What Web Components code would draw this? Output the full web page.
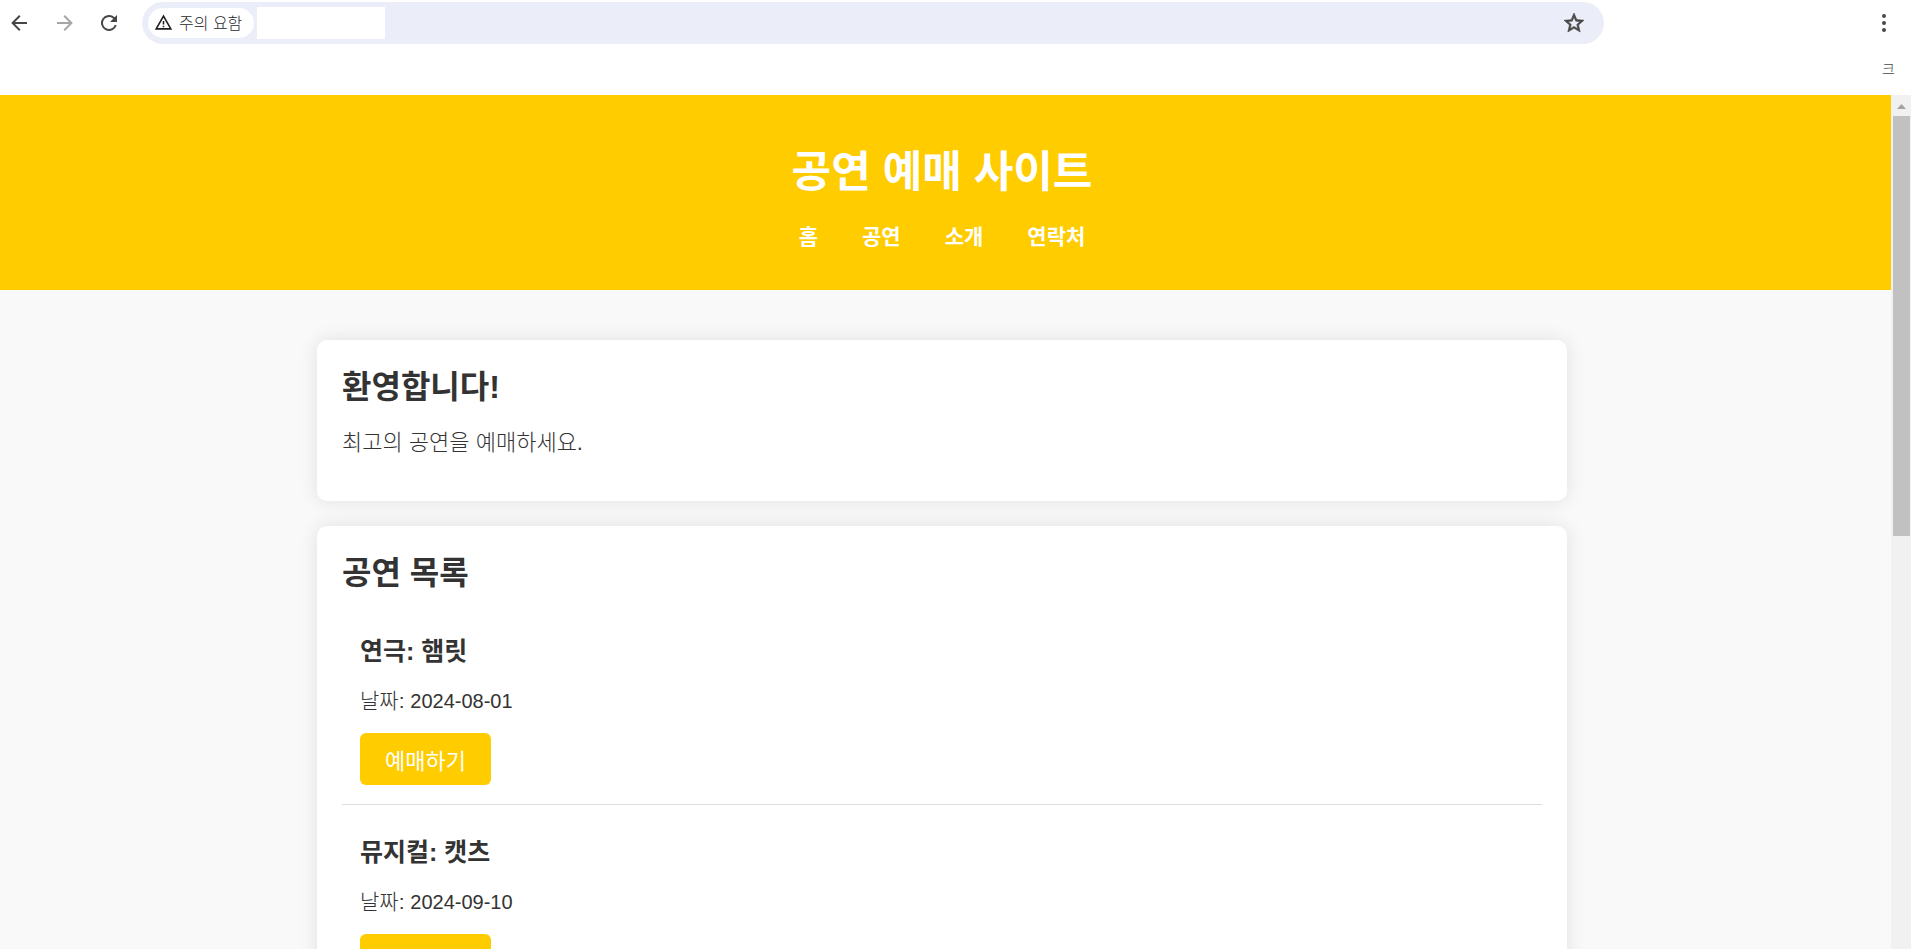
<!DOCTYPE html>
<html lang="ko">
<head>
<meta charset="UTF-8">
<meta name="viewport" content="width=device-width, initial-scale=1.0">
<title>공연 예매 사이트</title>
<style>
  html, body {
    height: 100%;
    margin: 0;
  }

  body {
    font-family: "Liberation Sans", "Noto Sans CJK KR", sans-serif;
    color: #333;
    overflow: hidden;
  }
</style>
</head>
<body>
<browser-window>
  <browser-toolbar slot="toolbar"></browser-toolbar>
  <site-header heading="공연 예매 사이트">
    <a href="#home">홈</a>
    <a href="#shows">공연</a>
    <a href="#about">소개</a>
    <a href="#contact">연락처</a>
  </site-header>
  <site-main>
    <content-card heading="환영합니다!">
      <welcome-text>최고의 공연을 예매하세요.</welcome-text>
    </content-card>
    <content-card heading="공연 목록">
      <show-item heading="연극: 햄릿" date="2024-08-01"></show-item>
      <show-item heading="뮤지컬: 캣츠" date="2024-09-10"></show-item>
    </content-card>
  </site-main>
</browser-window>

<script>
class BrowserWindow extends HTMLElement {
  constructor() {
    super();
    this.attachShadow({ mode: 'open' });
    this.shadowRoot.innerHTML = `
      <style>
        :host {
          display: flex;
          flex-direction: column;
          height: 100vh;
          background: white;
        }

        .view {
          display: flex;
          flex: 1;
          min-height: 0;
        }

        .page {
          flex: 1;
          min-width: 0;
          overflow: hidden;
          background: #f9f9f9;
        }
      </style>
      <slot name="toolbar"></slot>
      <div class="view">
        <div class="page"><slot></slot></div>
        <scroll-bar></scroll-bar>
      </div>
    `;
  }
}

class ScrollBar extends HTMLElement {
  constructor() {
    super();
    this.attachShadow({ mode: 'open' });
    this.shadowRoot.innerHTML = `
      <style>
        :host {
          display: flex;
          flex-direction: column;
          box-sizing: border-box;
          width: 20px;
          padding: 0 1px 0 2px;
          background: #f1f1f1;
        }

        svg {
          display: block;
          flex: none;
        }

        .thumb {
          flex: 420;
          background: #c1c1c1;
        }

        .rest {
          flex: 413;
        }
      </style>
      <svg width="17" height="21" viewBox="0 0 17 21"><path d="M4 14L8.500 9L13 14Z" fill="#a3a3a3"/></svg>
      <div class="thumb"></div>
      <div class="rest"></div>
    `;
  }
}

class BrowserToolbar extends HTMLElement {
  constructor() {
    super();
    this.attachShadow({ mode: 'open' });
    this.shadowRoot.innerHTML = `
      <style>
        :host {
          display: block;
          height: 95px;
          flex: none;
          color: #474747;
        }

        button {
          display: flex;
          align-items: center;
          justify-content: center;
          width: 45px;
          height: 42px;
          padding: 0;
          border: 0;
          background: none;
          color: inherit;
          font: inherit;
        }

        button:disabled {
          color: #a6a6a6;
        }

        svg {
          flex: none;
          fill: currentColor;
        }

        .bar {
          display: flex;
          align-items: center;
          padding: 2px 5px 0 0;
        }

        .nav {
          display: flex;
          width: 142px;
        }

        .nav button {
          justify-content: flex-start;
          padding-left: 7px;
        }

        .address {
          display: flex;
          align-items: center;
          flex: 1;
          height: 42px;
          padding-left: 6px;
          box-sizing: border-box;
          border-radius: 21px;
          background: #ebeef8;
        }

        .address .chip {
          justify-content: flex-start;
          width: 106px;
          height: 30px;
          padding: 0 0 2px 6px;
          gap: 6px;
          border-radius: 15px;
          background: white;
          color: #1f1f1f;
          font-size: 16px;
          font-weight: 300;
        }

        input {
          width: 128px;
          height: 32px;
          margin: 0 auto 0 3px;
          padding: 0 4px;
          box-sizing: border-box;
          border: 0;
          background: white;
          font: inherit;
        }

        .address .star {
          width: 60px;
        }

        .star path {
          stroke: currentColor;
          stroke-width: 0.6;
        }

        .extensions {
          width: 257px;
        }

        .bookmarks {
          display: flex;
          justify-content: flex-end;
          align-items: center;
          height: 48px;
          padding-right: 16px;
          font-size: 14px;
          font-weight: 300;
        }
      </style>
      <div class="bar">
        <div class="nav">
          <button aria-label="뒤로"><svg width="24" height="24" viewBox="0 0 24 24"><path d="M20 11v2H8l5.500 5.500-1.400 1.400L4.200 12l7.900-7.900 1.400 1.400L8 11z"/></svg></button>
          <button aria-label="앞으로" disabled><svg width="24" height="24" viewBox="0 0 24 24"><path d="M5 11v2h12l-5.500 5.500 1.400 1.400L20.800 12l-7.900-7.900-1.400 1.400L17 11z"/></svg></button>
          <button aria-label="새로고침"><svg width="24" height="24" viewBox="0 0 24 24"><path d="M17.650 6.350A8 8 0 1 0 19.730 14h-2.080A6 6 0 1 1 12 6c1.660 0 3.140.69 4.220 1.780L13 11h7V4z"/></svg></button>
        </div>
        <div class="address">
          <button class="chip"><svg width="19" height="19" viewBox="0 0 24 24"><path d="M1 21h22L12 2zm3.500-2L12 6l7.500 13zM11 16h2v2h-2zm0-6h2v4.500h-2z"/></svg><span>주의 요함</span></button>
          <input type="text" aria-label="주소">
          <button class="star" aria-label="북마크"><svg width="24" height="24" viewBox="0 0 24 24"><path d="M22 9.240l-7.190-.62L12 2 9.190 8.630 2 9.240l5.460 4.730L5.820 21 12 17.270 18.180 21l-1.630-7.030zM12 15.400l-3.760 2.270 1-4.280-3.320-2.880 4.380-.38L12 6.100l1.710 4.040 4.380.38-3.320 2.880 1 4.280z"/></svg></button>
        </div>
        <div class="extensions"></div>
        <button aria-label="메뉴"><svg width="24" height="24" viewBox="0 0 24 24"><circle cx="12" cy="5" r="2"/><circle cx="12" cy="12" r="2"/><circle cx="12" cy="19" r="2"/></svg></button>
      </div>
      <div class="bookmarks">크</div>
    `;
  }
}

class SiteHeader extends HTMLElement {
  connectedCallback() {
    this.attachShadow({ mode: 'open' });
    this.shadowRoot.innerHTML = `
      <style>
        :host {
          display: block;
          padding: 42px 7px 37px 0;
          background: #ffcc00;
          color: white;
          text-align: center;
        }

        h1 {
          margin: 0 0 14px;
          font-size: 43px;
          line-height: 70px;
        }

        nav {
          display: flex;
          justify-content: center;
          gap: 44px;
          font-size: 21px;
          line-height: 32px;
          font-weight: bold;
        }

        ::slotted(a) {
          color: white;
          text-decoration: none;
        }
      </style>
      <h1>${this.getAttribute('heading')}</h1>
      <nav><slot></slot></nav>
    `;
  }
}

class SiteMain extends HTMLElement {
  constructor() {
    super();
    this.attachShadow({ mode: 'open' });
    this.shadowRoot.innerHTML = `
      <style>
        :host {
          display: block;
          padding: 50px 7px 50px 0;
        }

        main {
          display: flex;
          flex-direction: column;
          gap: 25px;
          max-width: 1250px;
          margin: 0 auto;
        }
      </style>
      <main><slot></slot></main>
    `;
  }
}

class ContentCard extends HTMLElement {
  connectedCallback() {
    this.attachShadow({ mode: 'open' });
    this.shadowRoot.innerHTML = `
      <style>
        :host {
          display: block;
          padding: 25px;
          border-radius: 10px;
          background: white;
          box-shadow: 0 0 19px rgba(0, 0, 0, 0.1);
        }

        h2 {
          margin: 0 0 9px;
          font-size: 32px;
          line-height: 44px;
        }
      </style>
      <h2>${this.getAttribute('heading')}</h2>
      <slot></slot>
    `;
  }
}

class WelcomeText extends HTMLElement {
  constructor() {
    super();
    this.attachShadow({ mode: 'open' });
    this.shadowRoot.innerHTML = `
      <style>
        :host {
          display: block;
        }

        p {
          margin: 0;
          padding: 9px 0 17px;
          font-size: 22px;
          line-height: 32px;
          font-weight: 300;
        }
      </style>
      <p><slot></slot></p>
    `;
  }
}

class ShowItem extends HTMLElement {
  connectedCallback() {
    this.attachShadow({ mode: 'open' });
    this.shadowRoot.innerHTML = `
      <style>
        :host {
          display: block;
          padding: 30px 18px 19px;
          border-bottom: 1px solid #ddd;
        }

        h3 {
          margin: 0 0 17px;
          font-size: 25px;
          line-height: 34px;
        }

        p {
          margin: 0 0 16px;
          font-size: 21px;
          line-height: 32px;
          font-weight: 300;
        }

        time {
          font-size: 20px;
        }

        button {
          display: block;
          height: 52px;
          padding: 0 25px;
          border: 0;
          border-radius: 6px;
          background: #ffcc00;
          color: white;
          font-family: inherit;
          font-size: 22px;
          cursor: pointer;
        }

        button:hover {
          background: #e6b800;
        }
      </style>
      <h3>${this.getAttribute('heading')}</h3>
      <p>날짜: <time>${this.getAttribute('date')}</time></p>
      <button type="button">예매하기</button>
    `;
  }
}

customElements.define('scroll-bar', ScrollBar);
customElements.define('browser-window', BrowserWindow);
customElements.define('browser-toolbar', BrowserToolbar);
customElements.define('site-header', SiteHeader);
customElements.define('site-main', SiteMain);
customElements.define('content-card', ContentCard);
customElements.define('welcome-text', WelcomeText);
customElements.define('show-item', ShowItem);
</script>
</body>
</html>
